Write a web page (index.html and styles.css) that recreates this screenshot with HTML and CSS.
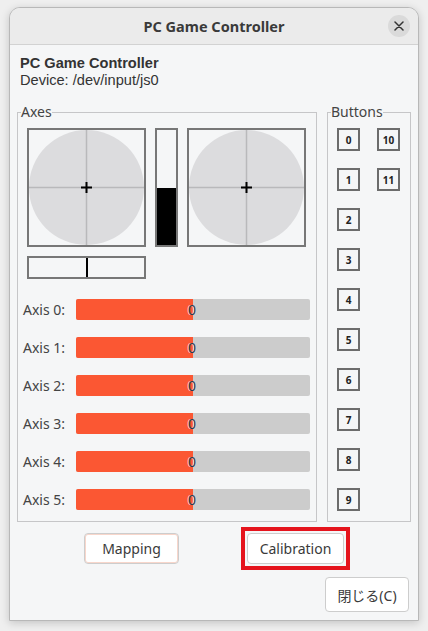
FILE: index.html
```html
<!DOCTYPE html>
<html lang="ja">
<head>
<meta charset="utf-8">
<title>PC Game Controller</title>
<link rel="stylesheet" href="styles.css">
</head>
<body>
<div class="window">
  <header class="titlebar">
    <span class="title">PC Game Controller</span>
    <span class="close-btn">
      <svg width="10" height="10" viewBox="0 0 10 10"><path d="M1 1L9 9M9 1L1 9" stroke="#333" stroke-width="1.5" stroke-linecap="round"/></svg>
    </span>
  </header>
  <main class="content">
    <div class="info">
      <div class="info-name">PC Game Controller</div>
      <div class="info-device">Device: /dev/input/js0</div>
    </div>
    <div class="groups">
      <fieldset class="group axes">
        <legend>Axes</legend>
        <div class="sticks">
          <div class="stick-col">
            <svg class="stick" width="119" height="119" viewBox="0 0 119 119">
              <rect x="1" y="1" width="117" height="117" fill="#f5f6f7" stroke="#777" stroke-width="2"/>
              <circle cx="59.5" cy="59.5" r="57.5" fill="#dcdcde"/>
              <path d="M59.5 2V117M2 59.5H117" stroke="#b9b9bb" stroke-width="1.5"/>
              <path d="M59.5 54V65M54 59.5H65" stroke="#000" stroke-width="2"/>
            </svg>
            <div class="hbar"><span class="hbar-mark"></span></div>
          </div>
          <div class="vbar"><span class="vbar-fill"></span></div>
          <svg class="stick" width="119" height="119" viewBox="0 0 119 119">
            <rect x="1" y="1" width="117" height="117" fill="#f5f6f7" stroke="#777" stroke-width="2"/>
            <circle cx="59.5" cy="59.5" r="57.5" fill="#dcdcde"/>
            <path d="M59.5 2V117M2 59.5H117" stroke="#b9b9bb" stroke-width="1.5"/>
            <path d="M59.5 54V65M54 59.5H65" stroke="#000" stroke-width="2"/>
          </svg>
        </div>
        <div class="axis-list">
          <div class="axis-row"><span class="axis-label">Axis 0:</span><div class="axis-bar"><span class="axis-fill" style="width:50%"></span><span class="axis-val">0</span></div></div>
          <div class="axis-row"><span class="axis-label">Axis 1:</span><div class="axis-bar"><span class="axis-fill" style="width:50%"></span><span class="axis-val">0</span></div></div>
          <div class="axis-row"><span class="axis-label">Axis 2:</span><div class="axis-bar"><span class="axis-fill" style="width:50%"></span><span class="axis-val">0</span></div></div>
          <div class="axis-row"><span class="axis-label">Axis 3:</span><div class="axis-bar"><span class="axis-fill" style="width:50%"></span><span class="axis-val">0</span></div></div>
          <div class="axis-row"><span class="axis-label">Axis 4:</span><div class="axis-bar"><span class="axis-fill" style="width:50%"></span><span class="axis-val">0</span></div></div>
          <div class="axis-row"><span class="axis-label">Axis 5:</span><div class="axis-bar"><span class="axis-fill" style="width:50%"></span><span class="axis-val">0</span></div></div>
        </div>
      </fieldset>
      <fieldset class="group buttons">
        <legend>Buttons</legend>
        <div class="btn-grid">
          <span class="jbtn">0</span><span class="jbtn">1</span><span class="jbtn">2</span><span class="jbtn">3</span><span class="jbtn">4</span>
          <span class="jbtn">5</span><span class="jbtn">6</span><span class="jbtn">7</span><span class="jbtn">8</span><span class="jbtn">9</span>
          <span class="jbtn">10</span><span class="jbtn">11</span>
        </div>
      </fieldset>
    </div>
    <div class="actions">
      <button class="btn btn-focus">Mapping</button>
      <div class="highlight"><button class="btn btn-cal">Calibration</button></div>
    </div>
    <div class="footer">
      <button class="btn btn-close">閉じる(C)</button>
    </div>
  </main>
</div>
</body>
</html>
```
FILE: styles.css
```css
* { box-sizing: border-box; }
html, body { margin: 0; }
body {
  width: 428px;
  height: 631px;
  background: #efefef;
  padding: 7px 9px 10px 9px;
  font-family: "Noto Sans", "Noto Sans CJK JP", sans-serif;
  color: #333;
  overflow: hidden;
}
.window {
  width: 410px;
  height: 614px;
  border: 1px solid #b8b8b8;
  border-radius: 11px 11px 0 0;
  background: #f5f6f7;
  box-shadow: 0 2px 8px rgba(0,0,0,0.18);
  overflow: hidden;
  display: flex;
  flex-direction: column;
}
.titlebar {
  height: 37px;
  flex: none;
  background: #ebebeb;
  border-bottom: 1px solid #d2d2d2;
  display: flex;
  align-items: center;
  justify-content: center;
  position: relative;
}
.title {
  font-weight: bold;
  font-size: 14.5px;
  color: #3a3a3a;
}
.close-btn {
  position: absolute;
  right: 8px;
  top: 7px;
  width: 22px;
  height: 22px;
  border-radius: 50%;
  background: #dadada;
  display: flex;
  align-items: center;
  justify-content: center;
}
.content {
  flex: 1;
  display: flex;
  flex-direction: column;
  padding: 10px 7px 0 7px;
}
.info {
  padding-left: 3px;
  font-family: "Liberation Sans", "Noto Sans", sans-serif;
  font-size: 14.6px;
  line-height: 17px;
  color: #333;
}
.info-name { font-weight: bold; }
.groups {
  display: flex;
  gap: 10px;
  margin-top: 15px;
}
.group {
  margin: 0;
  border: 1px solid #c6c6c8;
  border-radius: 0;
  padding: 8px 0 10px 0;
}
.group legend {
  padding: 0;
  margin-left: 3px;
  font-size: 14px;
  line-height: 16px;
  color: #444;
}
.axes { width: 300px; }
.buttons { width: 84px; }
.sticks {
  display: flex;
  gap: 9px;
  padding-left: 9px;
  align-items: flex-start;
}
.stick-col { display: flex; flex-direction: column; gap: 9px; }
.stick { display: block; }
.hbar {
  width: 119px;
  height: 23px;
  border: 2px solid #777;
  background: #f5f6f7;
  display: flex;
  justify-content: center;
}
.hbar-mark { width: 2px; background: #000; }
.vbar {
  width: 23px;
  height: 119px;
  border: 2px solid #777;
  background: #f5f6f7;
  display: flex;
  flex-direction: column;
  justify-content: flex-end;
}
.vbar-fill { height: 57px; background: #000; }
.axis-list {
  display: flex;
  flex-direction: column;
  gap: 17px;
  margin-top: 20px;
  padding: 0 6px 0 5px;
}
.axis-row { display: flex; align-items: center; height: 21px; }
.axis-label { width: 53px; font-size: 14px; color: #444; }
.axis-bar {
  flex: 1;
  height: 21px;
  background: #cccccc;
  border-radius: 2px;
  position: relative;
  display: flex;
  align-items: center;
}
.axis-fill {
  position: absolute;
  left: 0; top: 0; bottom: 0;
  background: #fb5733;
  border-radius: 2px 0 0 2px;
}
.axis-val {
  position: relative;
  width: 100%;
  text-align: center;
  font-size: 14px;
  color: #2e3a4e;
  text-shadow: -1px 0 0 rgba(255,255,255,0.7);
  padding-right: 2px;
}
.btn-grid {
  display: grid;
  grid-template-rows: repeat(10, 23px);
  grid-template-columns: 23px 23px;
  grid-auto-flow: column;
  row-gap: 17px;
  column-gap: 17px;
  padding-left: 9px;
}
.jbtn {
  width: 23px;
  height: 23px;
  border: 2px solid #6c6c6c;
  display: flex;
  align-items: center;
  justify-content: center;
  font-size: 10px;
  font-weight: bold;
  color: #222;
}
.actions {
  display: flex;
  align-items: center;
  padding-left: 67px;
  margin-top: 5px;
}
.btn {
  font-family: "Noto Sans", "Noto Sans CJK JP", sans-serif;
  font-size: 14px;
  color: #3a3a3a;
  background: #fff;
  border: 1px solid #cdcdcd;
  border-radius: 4px;
  padding: 0;
}
.btn-focus {
  width: 95px;
  height: 31px;
  box-shadow: inset 0 0 0 1px #f8d6cb;
}
.highlight {
  margin-left: 62px;
  border: 4px solid #e5141d;
  padding: 2px;
}
.btn-cal { width: 97px; height: 31px; display: block; }
.footer {
  display: flex;
  justify-content: flex-end;
  margin-top: 7px;
  padding-right: 2px;
}
.btn-close { width: 84px; height: 35px; font-size: 14px; }
```
